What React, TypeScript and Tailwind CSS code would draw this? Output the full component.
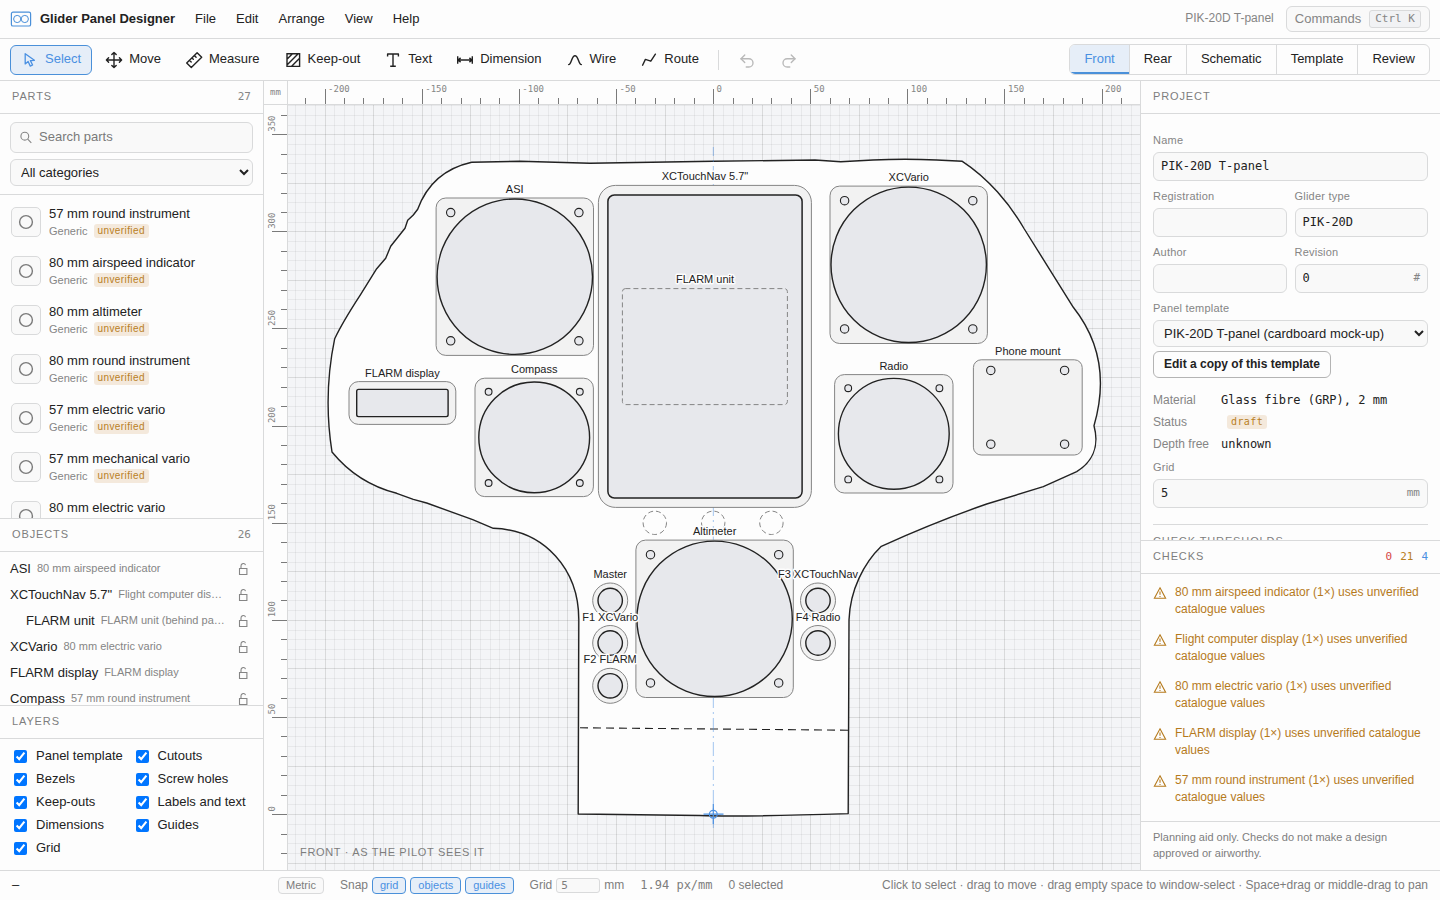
import { useLayoutEffect, useRef, useState } from "react";
import type { ReactNode } from "react";
import { Redo2, Undo2 } from "lucide-react";

const mono = 'font-["DejaVu_Sans_Mono",monospace]';

// canvas scale and where the datum sits, in canvas pixels
const SCALE = 1.9425;
const ORIGIN_X = 425.6;
const ORIGIN_Y = 709.6;

const snap = (value: number) => Math.floor(value) + 0.5;

// multiples of step that fall between two millimetre positions
const steps = (from: number, to: number, step: number) => {
  const out: number[] = [];
  for (let v = Math.ceil(from / step) * step; v <= to; v += step) out.push(v);
  return out;
};

const menus = ["File", "Edit", "Arrange", "View", "Help"];
const views = ["Front", "Rear", "Schematic", "Template", "Review"];

const parts = [
  "57 mm round instrument",
  "80 mm airspeed indicator",
  "80 mm altimeter",
  "80 mm round instrument",
  "57 mm electric vario",
  "57 mm mechanical vario",
  "80 mm electric vario",
];

const objects = [
  { name: "ASI", detail: "80 mm airspeed indicator" },
  { name: 'XCTouchNav 5.7"', detail: "Flight computer display" },
  { name: "FLARM unit", detail: "FLARM unit (behind panel)", child: true },
  { name: "XCVario", detail: "80 mm electric vario" },
  { name: "FLARM display", detail: "FLARM display" },
  { name: "Compass", detail: "57 mm round instrument" },
];

const layers = [
  "Panel template",
  "Cutouts",
  "Bezels",
  "Screw holes",
  "Keep-outs",
  "Labels and text",
  "Dimensions",
  "Guides",
  "Grid",
];

const checks = [
  "80 mm airspeed indicator (1×) uses unverified catalogue values",
  "Flight computer display (1×) uses unverified catalogue values",
  "80 mm electric vario (1×) uses unverified catalogue values",
  "FLARM display (1×) uses unverified catalogue values",
  "57 mm round instrument (1×) uses unverified catalogue values",
];

function ToolIcon({ children }: { children: ReactNode }) {
  return (
    <svg
      width="18"
      height="18"
      viewBox="0 0 18 18"
      fill="none"
      stroke="currentColor"
      strokeWidth="1.4"
      strokeLinecap="round"
      strokeLinejoin="round"
      className="shrink-0"
    >
      {children}
    </svg>
  );
}

const tools = [
  {
    name: "Select",
    icon: <path strokeWidth="1.3" d="M4.2 2.7v10.2l2.9-2.4 2.2 4.6 2.3-1.1-2.2-4.4 4-.3z" />,
  },
  {
    name: "Move",
    icon: (
      <path d="M9 1.6v14.8M1.6 9h14.8M6.8 3.6 9 1.4l2.2 2.2M6.8 14.4 9 16.6l2.2-2.2M3.6 6.8 1.4 9l2.2 2.2M14.4 6.8 16.6 9l-2.2 2.2" />
    ),
  },
  {
    name: "Measure",
    icon: (
      <path d="M1.7 11.9 12.1 1.7l4.6 4.6L6.3 16.5zM4.5 9.3l1.7 1.7M7 6.9l1.3 1.3M9.4 4.5l1.7 1.7" />
    ),
  },
  {
    name: "Keep-out",
    icon: (
      <path
        strokeLinecap="butt"
        strokeLinejoin="miter"
        d="M3 2.8h12.6v12.6H3zM3 8.2l5.4-5.4M3 14 14.2 2.8M7.4 15.4l8.2-8.2"
      />
    ),
  },
  {
    name: "Text",
    icon: <path strokeLinecap="butt" d="M3.6 5.4V3h10.8v2.4M9 3v12.3M6.2 15.3h5.6" />,
  },
  {
    name: "Dimension",
    icon: (
      <path
        strokeLinecap="butt"
        d="M1.7 5.2v7.6M16.3 5.2v7.6M2 9h14M4.6 6.9 2.2 9l2.4 2.1M13.4 6.9 15.8 9l-2.4 2.1"
      />
    ),
  },
  {
    name: "Wire",
    icon: <path d="M2.6 13.6C5.6 13.6 5.4 4.8 9 4.8s3.4 8.8 6.4 8.8" />,
  },
  { name: "Route", icon: <path d="M2.6 14.2 5.4 8.4l5.4 1.8 4.6-7" /> },
];

function Header() {
  return (
    <header className="flex h-[39px] shrink-0 items-center border-b border-[#d9dadb] px-[10px]">
      <svg width="22" height="16" viewBox="0 0 22 16" fill="none" stroke="#4a90d9" strokeWidth="1.2">
        <rect x="1.4" y="1.2" width="19.2" height="13.8" rx="1.6" />
        <circle cx="7.2" cy="8" r="3.6" strokeWidth="1" />
        <circle cx="14.8" cy="8" r="3.6" strokeWidth="1" />
      </svg>
      <h1 className="pb-px pl-2 text-[13px] font-bold">Glider Panel Designer</h1>
      <nav className="flex pb-px pl-[10px]">
        {menus.map((menu) => (
          <button key={menu} type="button" className="px-[10px]">
            {menu}
          </button>
        ))}
      </nav>
      <div className="ml-auto flex items-center gap-3">
        <span className="pb-[3px] text-xs text-[#858585]">PIK-20D T-panel</span>
        <button
          type="button"
          className="flex h-[26px] items-center gap-2 rounded-md border border-[#d9dadb] bg-[#f9f9f9] px-2 text-[#858585]"
        >
          Commands
          <kbd
            className={`${mono} flex h-[18px] items-center rounded-[3px] border border-[#d9dadb] bg-[#f1f2f4] px-[5px] pt-px text-[11px]`}
          >
            Ctrl K
          </kbd>
        </button>
      </div>
    </header>
  );
}

function Toolbar() {
  return (
    <div className="flex h-[42px] shrink-0 items-center gap-[2px] border-b border-[#d9dadb] px-[10px]">
      {tools.map((tool) => (
        <button
          key={tool.name}
          type="button"
          className={
            tool.name === "Select"
              ? "flex h-[30px] items-center gap-[6px] rounded-md border border-[#4a90d9] bg-[#e6eef8] px-[10px] text-[#4a90e2]"
              : "flex h-[30px] items-center gap-[6px] rounded-md border border-transparent px-[10px]"
          }
        >
          <ToolIcon>{tool.icon}</ToolIcon>
          <span className="pb-[2px]">{tool.name}</span>
        </button>
      ))}
      <div className="mx-[6px] h-5 w-px bg-[#d9dadb]" />
      <button type="button" aria-label="Undo" disabled className="px-[11px] pt-[3px] text-[#b9b9b9]">
        <Undo2 size={18} strokeWidth={1.8} />
      </button>
      <button type="button" aria-label="Redo" disabled className="px-[11px] pt-[3px] text-[#b9b9b9]">
        <Redo2 size={18} strokeWidth={1.8} />
      </button>
      <div className="ml-auto flex h-[31px] overflow-hidden rounded-md border border-[#d9dadb]">
        {views.map((view) => (
          <button
            key={view}
            type="button"
            className={
              view === "Front"
                ? "border-b-2 border-b-[#4a90d9] bg-[#e6eef8] px-[14px] text-[#4a90e2]"
                : "border-l border-[#d9dadb] px-[14px] pb-[2px]"
            }
          >
            {view}
          </button>
        ))}
      </div>
    </div>
  );
}

function PanelHead({ title, children }: { title: string; children?: ReactNode }) {
  return (
    <div className="flex h-[33px] shrink-0 items-center justify-between border-b border-[#d9dadb] px-3">
      <h2 className="pb-[2px] text-[11px] tracking-[0.08em] text-[#7d7d7d]">{title}</h2>
      {children}
    </div>
  );
}

function Badge({ children, className = "" }: { children: ReactNode; className?: string }) {
  return (
    <span
      className={`rounded-[3px] bg-[#f4e9dc] px-1 text-[10px] leading-[14px] tracking-[0.04em] text-[#b9801f] ${className}`}
    >
      {children}
    </span>
  );
}

function LeftSidebar() {
  return (
    <aside className="flex w-[264px] shrink-0 flex-col border-r border-[#d9dadb]">
      <section className="flex min-h-0 flex-1 flex-col">
        <PanelHead title="PARTS">
          <span className={`${mono} text-[11px] text-[#858585]`}>27</span>
        </PanelHead>
        <div className="flex flex-col gap-[6px] border-b border-[#d9dadb] px-[10px] py-2">
          <label className="flex h-[31px] items-center gap-[6px] rounded-md border border-[#d9dadb] bg-[#f9f9f9] px-2">
            <svg width="14" height="14" viewBox="0 0 14 14" fill="none" stroke="#858585" strokeWidth="1.1">
              <circle cx="5.8" cy="5.2" r="3.9" />
              <path d="m8.7 8.2 3.6 3.6" />
            </svg>
            <input
              type="search"
              placeholder="Search parts"
              aria-label="Search parts"
              className="min-w-0 flex-1 pb-[2px] outline-none placeholder:text-[#7a7a7a]"
            />
          </label>
          <select
            aria-label="Category"
            className="h-[27px] w-full rounded-md border border-[#d9dadb] bg-[#f9f9f9] px-[6px]"
          >
            <option>All categories</option>
          </select>
        </div>
        <ul className="min-h-0 flex-1 overflow-y-auto pt-[2px] [scrollbar-width:none]">
          {parts.map((part) => (
            <li key={part} className="flex h-[49px] items-center gap-2 px-[11px]">
              <span className="flex size-[30px] shrink-0 items-center justify-center rounded-[5px] border border-[#d9dadb] bg-[#f9f9f9]">
                <svg width="16" height="16" viewBox="0 0 16 16" fill="none" stroke="#7a7a7a" strokeWidth="1.4">
                  <circle cx="8" cy="8" r="6.4" />
                </svg>
              </span>
              <div>
                <p className="leading-[19px]">{part}</p>
                <p className="flex items-center gap-[6px] text-[11px] leading-4 text-[#858585]">
                  Generic <Badge>unverified</Badge>
                </p>
              </div>
            </li>
          ))}
        </ul>
      </section>

      <section className="border-t border-[#d9dadb]">
        <PanelHead title="OBJECTS">
          <span className={`${mono} text-[11px] text-[#858585]`}>26</span>
        </PanelHead>
        <ul className="max-h-[153px] overflow-y-auto pt-1 [scrollbar-width:none]">
          {objects.map((object) => (
            <li
              key={object.name}
              className={
                object.child
                  ? "flex h-[26px] items-center gap-[6px] pr-[10px] pl-[26px]"
                  : "flex h-[26px] items-center gap-[6px] px-[10px]"
              }
            >
              <span className="shrink-0">{object.name}</span>
              <span className="min-w-0 flex-1 truncate pb-[2px] text-[11px] text-[#858585]">
                {object.detail}
              </span>
              <button type="button" aria-label={`Lock ${object.name}`} className="flex w-5 justify-center">
                <svg width="14" height="14" viewBox="0 0 14 14" fill="none" stroke="#858585" strokeWidth="1.1">
                  <path d="M3.5 6.5h7.4v6H3.5zM5 6.3V4a2.3 2.3 0 0 1 4.5-.8" />
                </svg>
              </button>
            </li>
          ))}
        </ul>
      </section>

      <section className="border-t border-[#d9dadb]">
        <PanelHead title="LAYERS" />
        <div className="grid grid-cols-2 px-[10px] pt-[6px] pb-[10px]">
          {layers.map((layer) => (
            <label key={layer} className="flex h-[23px] items-center gap-[9px] px-1 whitespace-nowrap">
              <input type="checkbox" defaultChecked className="size-[13px]" />
              <span className="pb-px">{layer}</span>
            </label>
          ))}
        </div>
      </section>
    </aside>
  );
}

// square bezel with a round cutout and four screw holes
function RoundInstrument({ cx, cy, large = false }: { cx: number; cy: number; large?: boolean }) {
  const bezel = large ? 78.7 : 59.2;
  const radius = large ? 77.7 : 55.4;
  const hole = large ? 64.1 : 45.6;
  return (
    <g>
      <rect
        x={cx - bezel}
        y={cy - bezel}
        width={bezel * 2}
        height={bezel * 2}
        rx="9.7"
        fill="#f2f2f2"
        stroke="#858585"
      />
      <g fill="#e7e8ec" stroke="#222222">
        <circle cx={cx} cy={cy} r={radius} strokeWidth="1.4" />
        {[-hole, hole].map((dx) =>
          [-hole, hole].map((dy) => (
            <circle key={`${dx} ${dy}`} cx={cx + dx} cy={cy + dy} r={large ? 4.2 : 3.4} strokeWidth="1.1" />
          ))
        )}
      </g>
    </g>
  );
}

function Breaker({ cx, cy }: { cx: number; cy: number }) {
  return (
    <g>
      <circle cx={cx} cy={cy} r="17.5" fill="#f2f2f2" stroke="#858585" />
      <circle cx={cx} cy={cy} r="12.2" fill="#e7e8ec" stroke="#222222" strokeWidth="1.4" />
    </g>
  );
}

const labels: [string, number, number][] = [
  ["ASI", 514.7, 193],
  ['XCTouchNav 5.7"', 705, 180],
  ["FLARM unit", 705, 283],
  ["XCVario", 908.7, 181],
  ["FLARM display", 402.4, 377],
  ["Compass", 534.2, 373],
  ["Radio", 893.8, 370],
  ["Phone mount", 1027.8, 355],
  ["Altimeter", 714.6, 535],
  ["Master", 610.2, 578],
  ["F1 XCVario", 610.2, 621],
  ["F2 FLARM", 610.2, 663],
  ["F3 XCTouchNav", 818, 578],
  ["F4 Radio", 818, 621],
];

function PanelDrawing() {
  return (
    <g transform="translate(-288 -105)">
      <path
        d="M471.7 162.3 520 161.2 590 163.3 713 161.3 815 160 840.7 161.7 873 160Q905 158.6 936.7 160L962.3 161.3C988 178 1010 204 1024.3 229L1073.3 307.3C1100 341 1107 381 1094 425.7 1100 448 1091 463 1076.7 471.7L1043.3 486.7 986.7 504Q935 522 881.3 546.3C864 563 850 590 849 620L848.2 813.6Q740 817 700 815.5L578.2 814 578.8 620C579 570 545 530 493.3 528.3L472.7 519.7 426.7 503 413.3 499.3 396.7 493.3C372 487 350 474 332 452Q323 395 334.7 338.7 342 323 360.7 294.3L376.7 268.7 385.7 258.3 390.7 246.3 405 228.3 407.7 220.3 413.3 215 417.7 209.3C427 184 446 168 471.7 162.3Z"
        fill="#fdfdfd"
        stroke="#222222"
        strokeWidth="1.4"
        strokeLinejoin="round"
      />
      <path d="M580 727.8 848 730.2" stroke="#222222" strokeWidth="1.1" strokeDasharray="8 5" />
      <path
        d="M713.4 828V147"
        stroke="#4a90e2"
        strokeWidth="1.2"
        strokeOpacity="0.42"
        strokeDasharray="14 4 2 4"
      />

      <RoundInstrument cx={514.8} cy={276.7} large />
      <rect x="598.4" y="185.4" width="213" height="322" rx="17" fill="#f2f2f2" stroke="#858585" />
      <rect x="607.9" y="195" width="194.2" height="303" rx="6.5" fill="#e7e8ec" stroke="#222222" strokeWidth="1.5" />
      <rect
        x="622.4"
        y="288.6"
        width="165"
        height="116"
        rx="3"
        fill="none"
        stroke="#858585"
        strokeDasharray="5 3"
      />
      <RoundInstrument cx={908.7} cy={264.8} large />
      <rect x="349" y="381.6" width="106.8" height="42.8" rx="9.5" fill="#f2f2f2" stroke="#858585" />
      <rect x="356.7" y="389.4" width="91.4" height="27.2" rx="1.8" fill="#e7e8ec" stroke="#222222" strokeWidth="1.4" />
      <RoundInstrument cx={534.2} cy={437.4} />
      <RoundInstrument cx={893.8} cy={433.8} />
      <rect x="973.4" y="359.8" width="108.8" height="95.2" rx="7.8" fill="#f2f2f2" stroke="#858585" />
      <g fill="#e7e8ec" stroke="#222222" strokeWidth="1.1">
        <circle cx="990.8" cy="370.4" r="4.2" />
        <circle cx="1064.6" cy="370.4" r="4.2" />
        <circle cx="990.8" cy="444.2" r="4.2" />
        <circle cx="1064.6" cy="444.2" r="4.2" />
      </g>
      <g fill="none" stroke="#858585" strokeDasharray="5 3">
        <circle cx="654.8" cy="522.8" r="11.7" />
        <circle cx="713.2" cy="522.8" r="11.7" />
        <circle cx="771.4" cy="522.8" r="11.7" />
      </g>
      <RoundInstrument cx={714.6} cy={618.8} large />
      <Breaker cx={610.2} cy={600.5} />
      <Breaker cx={610.2} cy={643} />
      <Breaker cx={610.2} cy={685.8} />
      <Breaker cx={818} cy={600.5} />
      <Breaker cx={818} cy={643} />

      <g stroke="#4a90e2" strokeWidth="1.2" fill="none">
        <circle cx="713.3" cy="814.2" r="3.9" />
        <path d="M703.5 814.2h20M713.3 804v20" />
      </g>

      <g
        textAnchor="middle"
        fontSize="11"
        fill="#222222"
        stroke="#fdfdfd"
        strokeWidth="3"
        strokeLinejoin="round"
        paintOrder="stroke"
      >
        {labels.map(([text, x, y]) => (
          <text key={text} x={x} y={y}>
            {text}
          </text>
        ))}
      </g>
    </g>
  );
}

function Canvas() {
  const viewRef = useRef<HTMLDivElement>(null);
  const [size, setSize] = useState({ width: 0, height: 0 });

  useLayoutEffect(() => {
    const view = viewRef.current;
    if (!view) return;
    const measure = () => setSize({ width: view.clientWidth, height: view.clientHeight });
    measure();
    const observer = new ResizeObserver(measure);
    observer.observe(view);
    return () => observer.disconnect();
  }, []);

  const left = -ORIGIN_X / SCALE;
  const right = (size.width - ORIGIN_X) / SCALE;
  const bottom = (ORIGIN_Y - size.height) / SCALE;
  const top = ORIGIN_Y / SCALE;
  // labels need some room before the edge
  const room = 12;

  return (
    <main className="grid min-w-0 flex-1 grid-cols-[24px_minmax(0,1fr)] grid-rows-[24px_minmax(0,1fr)]">
      <div
        className={`${mono} flex items-center justify-center border-r border-b border-[#d9dadb] pt-px text-[9px] text-[#858585]`}
      >
        mm
      </div>
      <div className="overflow-hidden border-b border-[#d9dadb]">
        <svg className={`${mono} block h-full w-full`} fontSize="9" fill="#858585">
          {steps(left, right, 10).map((mm) => (
            <path
              key={mm}
              d={`M${snap(ORIGIN_X + mm * SCALE)} ${mm % 50 === 0 ? 8 : 17}V24`}
              stroke="#7a7a7a"
            />
          ))}
          {steps(left, right - room, 50).map((mm) => (
            <text key={mm} x={ORIGIN_X + mm * SCALE + 3} y="11">
              {mm}
            </text>
          ))}
        </svg>
      </div>
      <div className="overflow-hidden border-r border-[#d9dadb]">
        <svg className={`${mono} block h-full w-full`} fontSize="9" fill="#858585">
          {steps(bottom, top, 10).map((mm) => (
            <path
              key={mm}
              d={`M${mm % 50 === 0 ? 8 : 17} ${snap(ORIGIN_Y - mm * SCALE)}H24`}
              stroke="#7a7a7a"
            />
          ))}
          {steps(bottom, top - room, 50).map((mm) => (
            <text key={mm} transform={`translate(11 ${ORIGIN_Y - mm * SCALE - 3}) rotate(-90)`}>
              {mm}
            </text>
          ))}
        </svg>
      </div>
      <div ref={viewRef} className="relative overflow-hidden bg-[#f4f5f7]">
        <svg className="block h-full w-full">
          <g stroke="#000000">
            {steps(left, right, 5).map((mm) => (
              <path
                key={mm}
                d={`M${snap(ORIGIN_X + mm * SCALE)} 0V${size.height}`}
                strokeOpacity={mm % 25 === 0 ? 0.11 : 0.05}
              />
            ))}
            {steps(bottom, top, 5).map((mm) => (
              <path
                key={mm}
                d={`M0 ${snap(ORIGIN_Y - mm * SCALE)}H${size.width}`}
                strokeOpacity={mm % 25 === 0 ? 0.11 : 0.05}
              />
            ))}
          </g>
          <PanelDrawing />
        </svg>
        <p className="absolute bottom-[10px] left-3 text-[11px] tracking-[0.06em] text-[#7d7d7d]">
          FRONT · AS THE PILOT SEES IT
        </p>
      </div>
    </main>
  );
}

function Field({ label, value, unit }: { label: string; value: string; unit?: string }) {
  return (
    <label className="flex min-w-0 flex-col gap-1">
      <span className="text-[11px] leading-4 tracking-[0.02em] text-[#858585]">{label}</span>
      <span className="flex h-[29px] items-center rounded-md border border-[#d9dadb] bg-[#f9f9f9] px-[7px]">
        <input
          type="text"
          defaultValue={value}
          className={`${mono} min-w-0 flex-1 pb-[2px] text-xs outline-none`}
        />
        {unit && <span className={`${mono} text-[11px] text-[#858585]`}>{unit}</span>}
      </span>
    </label>
  );
}

function RightSidebar() {
  return (
    <aside className="flex w-[300px] shrink-0 flex-col border-l border-[#d9dadb]">
      <PanelHead title="PROJECT" />
      <div className="min-h-0 flex-1 overflow-y-auto px-3 pt-[18px] [scrollbar-width:none]">
        <div className="flex flex-col gap-[7px]">
          <Field label="Name" value="PIK-20D T-panel" />
          <div className="grid grid-cols-2 gap-x-2 gap-y-[7px]">
            <Field label="Registration" value="" />
            <Field label="Glider type" value="PIK-20D" />
            <Field label="Author" value="" />
            <Field label="Revision" value="0" unit="#" />
          </div>
          <label className="flex flex-col gap-1">
            <span className="text-[11px] leading-4 tracking-[0.02em] text-[#858585]">Panel template</span>
            <select className="h-[27px] w-full rounded-md border border-[#d9dadb] bg-[#f9f9f9] px-[6px]">
              <option>PIK-20D T-panel (cardboard mock-up)</option>
            </select>
          </label>
        </div>
        <button
          type="button"
          className="mt-1 h-[27px] rounded-md border border-[#b4b4b4] px-[10px] pb-px text-xs font-bold"
        >
          Edit a copy of this template
        </button>
        <dl className="mt-[13px] grid grid-cols-[60px_1fr] gap-x-2 gap-y-1 text-xs leading-[18px]">
          <dt className="text-[#858585]">Material</dt>
          <dd className={mono}>Glass fibre (GRP), 2 mm</dd>
          <dt className="text-[#858585]">Status</dt>
          <dd className="flex items-center pl-[6px]">
            <Badge className={mono}>draft</Badge>
          </dd>
          <dt className="text-[#858585]">Depth free</dt>
          <dd className={mono}>unknown</dd>
        </dl>
        <div className="mt-[6px] border-b border-[#d9dadb] pb-4">
          <Field label="Grid" value="5" unit="mm" />
        </div>
        <h3 className="pt-2 text-[11px] leading-4 tracking-[0.08em] text-[#7d7d7d]">CHECK THRESHOLDS</h3>
      </div>

      <section className="border-t border-[#d9dadb]">
        <PanelHead title="CHECKS">
          <span className={`${mono} flex gap-2 pt-px text-[11px]`}>
            <span className="text-[#d64545]">0</span>
            <span className="text-[#b9801f]">21</span>
            <span className="text-[#4a90e2]">4</span>
          </span>
        </PanelHead>
        <ul className="flex flex-col gap-[13px] px-3 pt-[10px] pb-[15px] text-xs leading-[17px] text-[#b57a1c]">
          {checks.map((check) => (
            <li key={check} className="flex gap-2">
              <svg
                width="14"
                height="14"
                viewBox="0 0 14 14"
                fill="none"
                stroke="currentColor"
                strokeWidth="1.1"
                className="mt-[2px] shrink-0"
              >
                <path d="M7 1.8 12.6 12.2H1.4zM7 5.4v3.4M7 9.9v1.2" />
              </svg>
              <span>{check}</span>
            </li>
          ))}
        </ul>
        <p className="border-t border-[#d9dadb] px-3 pt-[7px] pb-[9px] text-[11px] leading-4 text-[#7d7d7d]">
          Planning aid only. Checks do not make a design approved or airworthy.
        </p>
      </section>
    </aside>
  );
}

function StatusBar() {
  return (
    <footer className="flex h-[30px] shrink-0 items-center gap-4 border-t border-[#d9dadb] px-3 pb-px text-xs whitespace-nowrap text-[#7d7d7d]">
      <span className={`${mono} min-w-[250px] text-[#222222]`}>–</span>
      <button
        type="button"
        className="h-[17px] rounded-[4px] border border-[#d9dadb] bg-[#f9f9f9] px-[7px] text-[11px] leading-[15px]"
      >
        Metric
      </button>
      <div className="flex items-center gap-1">
        <span>Snap</span>
        {["grid", "objects", "guides"].map((target) => (
          <button
            key={target}
            type="button"
            className="h-[17px] rounded-[4px] border border-[#4a90d9] bg-[#e6eef8] px-[7px] text-[11px] leading-[15px] text-[#4a90e2]"
          >
            {target}
          </button>
        ))}
      </div>
      <label className="flex items-center gap-1">
        Grid
        <input
          type="text"
          defaultValue="5"
          className={`${mono} h-[15px] w-11 rounded-[3px] border border-[#d9dadb] bg-[#f9f9f9] px-1 text-[11px]`}
        />
        mm
      </label>
      <span className={mono}>1.94 px/mm</span>
      <span>0 selected</span>
      <span className="ml-auto">
        Click to select · drag to move · drag empty space to window-select · Space+drag or middle-drag to pan
      </span>
    </footer>
  );
}

export default function App() {
  return (
    <div className='flex h-screen flex-col overflow-hidden bg-[#fdfdfd] font-["Liberation_Sans",Arial,sans-serif] text-[13px] text-[#222222]'>
      <Header />
      <Toolbar />
      <div className="flex min-h-0 flex-1">
        <LeftSidebar />
        <Canvas />
        <RightSidebar />
      </div>
      <StatusBar />
    </div>
  );
}
